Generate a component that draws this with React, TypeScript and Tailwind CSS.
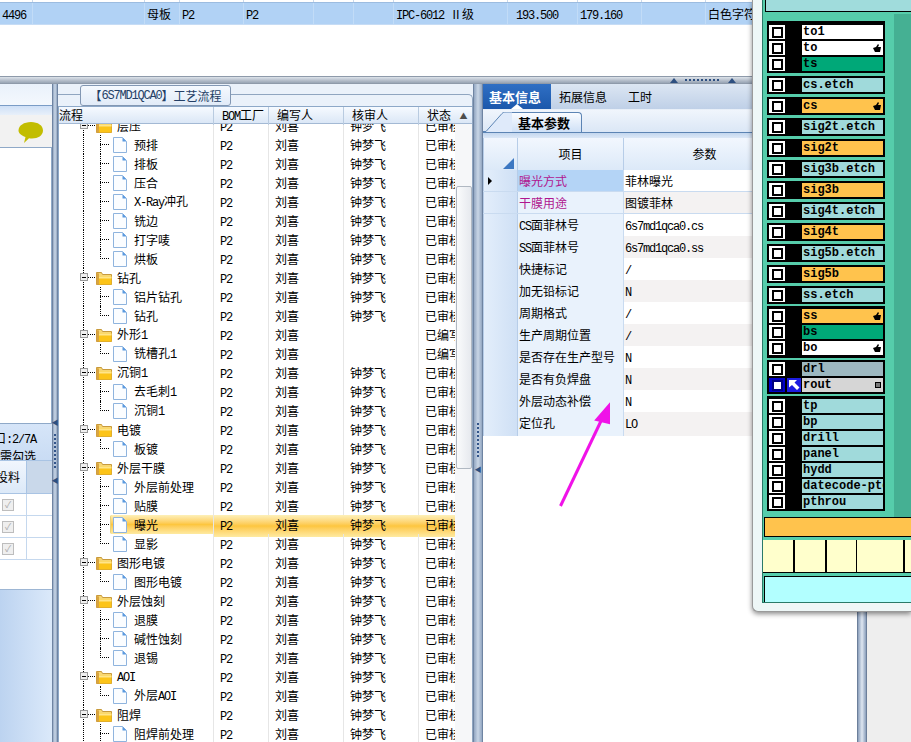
const FONT = '"Noto Sans CJK SC", sans-serif';

// latin text in the old app is a 6px wide bitmap font, cjk 12px
function Mix({ text }: { text: string }) {
  return (
    <>
      {text.split(/([\x00-\x7f]+)/).map((s, i) =>
        /^[\x00-\x7f]+$/.test(s) ? (
          <span key={i} className="font-['Liberation_Mono'] text-[12px] tracking-[-1.2px]">
            {s}
          </span>
        ) : (
          <span key={i}>{s}</span>
        )
      )}
    </>
  );
}

const topCols = "grid grid-cols-[33px_112px_35px_64px_70px_40px_40px_114px_70px_64px_64px_300px]";
const topRow = ["4496", "", "母板", "P2", "P2", "", "", "IPC-6012 Ⅱ级", "193.500", "179.160", "", "白色字符"];

type Node = { n: string; folder?: boolean; last?: boolean; sel?: boolean; draft?: boolean };
const tree: Node[] = [
  { n: "层压", folder: true },
  { n: "预排" },
  { n: "排板" },
  { n: "压合" },
  { n: "X-Ray冲孔" },
  { n: "铣边" },
  { n: "打字唛" },
  { n: "烘板", last: true },
  { n: "钻孔", folder: true },
  { n: "铝片钻孔" },
  { n: "钻孔", last: true },
  { n: "外形1", folder: true, draft: true },
  { n: "铣槽孔1", last: true, draft: true },
  { n: "沉铜1", folder: true },
  { n: "去毛刺1" },
  { n: "沉铜1", last: true },
  { n: "电镀", folder: true },
  { n: "板镀", last: true },
  { n: "外层干膜", folder: true },
  { n: "外层前处理" },
  { n: "贴膜" },
  { n: "曝光", sel: true },
  { n: "显影", last: true },
  { n: "图形电镀", folder: true },
  { n: "图形电镀", last: true },
  { n: "外层蚀刻", folder: true },
  { n: "退膜" },
  { n: "碱性蚀刻" },
  { n: "退锡", last: true },
  { n: "AOI", folder: true },
  { n: "外层AOI", last: true },
  { n: "阻焊", folder: true },
  { n: "阻焊前处理" },
];

const params: [string, string][] = [
  ["曝光方式", "菲林曝光"],
  ["干膜用途", "图镀菲林"],
  ["CS面菲林号", "6s7md1qca0.cs"],
  ["SS面菲林号", "6s7md1qca0.ss"],
  ["快捷标记", "/"],
  ["加无铅标记", "N"],
  ["周期格式", "/"],
  ["生产周期位置", "/"],
  ["是否存在生产型号", "N"],
  ["是否有负焊盘", "N"],
  ["外层动态补偿", "N"],
  ["定位孔", "LO"],
];

function FolderIcon() {
  return (
    <svg width="16" height="16" viewBox="0 0 16 16" className="shrink-0">
      <path d="M0.5 2.5h5l1 2h9v10h-15z" fill="#f7d774" stroke="#c89a3c" />
      <path d="M3 6.5h12.5v8h-12.5z" fill="#fcc419" />
      <path d="M3 6.5h12.5v2h-12.5z" fill="#ffe58a" />
      <path d="M0.5 3v11.5h2.5v-11z" fill="#d9a441" />
    </svg>
  );
}

function DocIcon() {
  return (
    <svg width="14" height="16" viewBox="0 0 14 16" className="shrink-0">
      <path d="M0.5 0.5h9l4 4v11h-13z" fill="#fbfdff" stroke="#8fb4de" />
      <path d="M9.5 0.5v4h4z" fill="#5b9ae0" />
    </svg>
  );
}

function Expander() {
  return (
    <span className="absolute left-[21px] top-[5px] flex h-[8px] w-[8px] items-center justify-center border border-[#9a9a9a] bg-[#f0f0f0]">
      <span className="h-px w-[4px] bg-black" />
    </span>
  );
}

function TreeRow({ node }: { node: Node }) {
  const cell = node.sel
    ? "bg-gradient-to-b from-[#fdf0b8] via-[#fdc63e] to-[#feeaa0]"
    : "border-r border-[#e6e6e6]";
  return (
    <div className="grid h-[19px] grid-cols-[155px_55px_75px_75px_36px] text-[12px] leading-[19px] text-black">
      <div className="relative flex h-[19px] items-center whitespace-nowrap border-r border-[#e6e6e6]">
        {node.sel && (
          <span className="absolute inset-y-0 left-[51px] right-0 rounded-l-[2px] border-l border-[#e8d27c] bg-gradient-to-b from-[#fdf0b8] via-[#fdc63e] to-[#feeaa0]" />
        )}
        <span className="absolute inset-y-0 left-[24px] border-l border-dotted border-black" />
        {node.folder ? (
          <>
            <span className="absolute left-[29px] top-[9px] w-[7px] border-t border-dotted border-black" />
            <Expander />
            <span className="relative ml-[37px] mr-[5px]">
              <FolderIcon />
            </span>
          </>
        ) : (
          <>
            <span className={`absolute left-[41px] top-0 border-l border-dotted border-black ${node.last ? "h-[10px]" : "h-[19px]"}`} />
            <span className="absolute left-[41px] top-[9px] w-[9px] border-t border-dotted border-black" />
            <span className="relative ml-[54px] mr-[7px]">
              <DocIcon />
            </span>
          </>
        )}
        <span className="relative">
          <Mix text={node.n} />
        </span>
      </div>
      <div className={`pl-[6px] ${cell}`}>
        <Mix text="P2" />
      </div>
      <div className={`pl-[6px] ${cell}`}>刘喜</div>
      <div className={`pl-[6px] ${cell}`}>{node.draft ? "" : "钟梦飞"}</div>
      <div className={`overflow-hidden whitespace-nowrap pl-[6px] ${node.sel ? cell : ""}`}>
        {node.draft ? "已编写" : "已审核"}
      </div>
    </div>
  );
}

function Splitter({ pad, arrowFirst }: { pad: string; arrowFirst?: boolean }) {
  return (
    <div className={`flex shrink-0 flex-col items-center gap-[8px] border-x border-[#6f84a2] bg-gradient-to-r from-[#93a7c2] via-[#c9d6e6] to-[#93a7c2] ${pad}`}>
      {arrowFirst && <span className="text-[7px] leading-[8px] text-[#2d4f80]">◀</span>}
      <span className="h-[34px] border-l-2 border-dotted border-[#33558a]" />
      <span className="text-[7px] leading-[8px] text-[#2d4f80]">◀</span>
    </div>
  );
}

function LeftColumn() {
  return (
    <div className="flex w-[52px] shrink-0 flex-col overflow-hidden">
      <div className="h-[22px] shrink-0 border-b border-[#7a9cc6] bg-gradient-to-b from-[#e9f1fb] to-[#f4f8fd]" />
      <div className="h-[9px] shrink-0 bg-gradient-to-b from-[#cfe0f6] to-[#e8f0fa]" />
      <div className="flex h-[32px] shrink-0 items-center justify-end bg-[#f2f2f2] pr-[8px] pt-[4px]">
        <svg width="26" height="22" viewBox="0 0 26 22">
          <path d="M13 0c7 0 12 3.500 12 8.500s-5 8-11 8c-1 0-2 0-3-.3l-5 4.800 1.500-6c-4-1.500-7-3.700-7-6.500 0-5 5.500-8.500 12.500-8.500z" fill="#c2bd00" />
        </svg>
      </div>
      <div className="h-[277px] shrink-0 border-y border-r border-[#8fa9c8] bg-white" />
      <div className="h-[36px] shrink-0 whitespace-nowrap bg-gradient-to-b from-[#d6e5f8] to-[#c9dcf4] text-[12px] leading-[15px] text-black">
        <div className="-ml-[6px] pt-[6px]">
          <Mix text="口:2/7A" />
        </div>
        <div>需勾选</div>
      </div>
      <div className="grid h-[34px] shrink-0 grid-cols-[27px_25px] border-y border-[#a9c4e4] text-[12px] leading-[32px]">
        <div className="overflow-hidden whitespace-nowrap border-r border-[#a9c4e4] bg-gradient-to-b from-[#f1f6fd] to-[#dce9f8]">
          <span className="-ml-[4px] block">投料</span>
        </div>
        <div className="bg-[#c9d8ea]" />
      </div>
      {[0, 1, 2].map((i) => (
        <div key={i} className="grid h-[22px] shrink-0 grid-cols-[27px_25px] border-b border-[#c5d8ee] bg-white">
          <div className="flex items-center border-r border-[#c5d8ee] pl-[2px]">
            <span className="flex h-[12px] w-[12px] items-center justify-center border border-[#bdbdbd] bg-[#efefef] text-[9px] leading-none text-[#aaaaaa]">
              ✓
            </span>
          </div>
          <div />
        </div>
      ))}
      <div className="h-[30px] shrink-0 border-b border-[#9db6d4] bg-white" />
      <div className="flex-1 bg-gradient-to-r from-[#bcd3f0] to-[#dbe9fa]" />
    </div>
  );
}

function TreePanel() {
  return (
    <div className="relative flex w-[415px] shrink-0 flex-col bg-[#eaf1fa]">
      <div className="h-[10px] shrink-0" />
      <div className="flex min-h-0 flex-1 flex-col rounded-tr-[5px] border-r border-t border-[#8fa5c0] pt-[11px]">
        <div className="flex min-h-0 flex-1 flex-col overflow-hidden border-l border-t border-[#8da8c8] bg-white">
          <div className="relative z-10 grid h-[17px] shrink-0 grid-cols-[155px_55px_75px_75px_36px_17px] border-b border-[#a3b9d4] bg-gradient-to-b from-[#f6faff] to-[#dbe7f6] text-[12px] leading-[16px] text-black">
            <div className="border-r border-[#b9cbe0]">流程</div>
            <div className="border-r border-[#b9cbe0] pl-[8px]">
              <Mix text="BOM工厂" />
            </div>
            <div className="border-r border-[#b9cbe0] pl-[8px]">编写人</div>
            <div className="border-r border-[#b9cbe0] pl-[8px]">核审人</div>
            <div className="pl-[8px]">状态</div>
            <div className="flex items-center justify-center text-[8px] text-[#4c4c4c]">▲</div>
          </div>
          <div className="flex min-h-0 flex-1">
            <div className="-mt-[8px] w-[396px] shrink-0">
              {tree.map((node, i) => (
                <TreeRow key={i} node={node} />
              ))}
            </div>
            <div className="flex-1 bg-[#f6f7f9] pt-[62px]">
              <div className="mx-auto h-[283px] w-[16px] rounded-[2px] border border-[#b0b8c2] bg-gradient-to-r from-[#fafbfc] to-[#e6e9ee]" />
            </div>
          </div>
        </div>
      </div>
      <div className="absolute left-[22px] top-[1px] flex h-[21px] w-[151px] items-center justify-center whitespace-nowrap rounded-b-[3px] rounded-t-[3px] border border-[#8297b3] bg-gradient-to-b from-[#f5f9fe] to-[#e1ebf8] text-[12px] text-[#243f66]">
        <Mix text="【6S7MD1QCA0】工艺流程" />
      </div>
    </div>
  );
}

function ParamPanel() {
  return (
    <div className="flex w-[374px] shrink-0 flex-col bg-white">
      <div className="flex h-[26px] shrink-0 items-stretch border-b border-[#e8eff8] bg-gradient-to-b from-[#dce6f3] to-[#bfd0e7] text-[12px]">
        <div className="relative flex w-[68px] items-center bg-gradient-to-b from-[#2f6fc4] to-[#1c58ab] pl-[6px] text-[13px] font-bold text-white">
          基本信息
          <span className="absolute bottom-0 left-1/2 h-0 w-0 -translate-x-1/2 border-x-[6px] border-b-[5px] border-x-transparent border-b-white" />
        </div>
        <div className="ml-[8px] flex items-center text-black">拓展信息</div>
        <div className="ml-[21px] flex items-center text-black">工时</div>
      </div>
      <div className="flex h-[23px] shrink-0 items-end border-b border-[#5c84b4] bg-gradient-to-b from-[#f0f5fc] to-[#dbe7f6]">
        <svg width="29" height="20" viewBox="0 0 29 20" className="shrink-0">
          <path d="M0 20h3l16-18c1-1 2-2 4-2h6v20z" fill="#dfeafa" />
          <path d="M0 19.500h3l16-18c1-1 2-1.500 4-1.500h6" fill="none" stroke="#5c84b4" />
        </svg>
        <div className="flex h-[20px] w-[70px] items-center rounded-tr-[4px] border-r border-t border-[#5c84b4] bg-gradient-to-b from-[#fafcff] to-[#cfe0f6] pl-[6px] text-[13px] font-bold leading-none text-black">
          基本参数
        </div>
      </div>
      <div className="h-[5px] shrink-0 bg-gradient-to-b from-[#c3d6ee] to-[#dce8f7]" />
      <div className="grid h-[32px] shrink-0 grid-cols-[35px_106px_162px] border-b border-[#9db8da] text-[12px] leading-[32px] text-black">
        <div className="relative border-x border-[#b7cde8] bg-gradient-to-b from-[#f2f7fe] to-[#dce9f8]">
          <span className="absolute bottom-[1px] right-[3px] h-0 w-0 border-b-[11px] border-l-[11px] border-b-[#3d78c2] border-l-transparent" />
        </div>
        <div className="border-r border-[#b7cde8] bg-gradient-to-b from-[#f2f7fe] to-[#dce9f8] text-center">项目</div>
        <div className="border-r border-[#b7cde8] bg-gradient-to-b from-[#f2f7fe] to-[#dce9f8] text-center">参数</div>
      </div>
      {params.map(([key, val], i) => (
        <div key={key} className="grid h-[22px] shrink-0 grid-cols-[35px_106px_233px] border-b border-[#c9dbf0] text-[12px] leading-[21px] text-black">
          <div className="flex items-center border-x border-[#b7cde8] bg-gradient-to-r from-[#e3eefb] to-[#cfe0f5] pl-[4px]">
            {i === 0 && <span className="h-0 w-0 border-y-[4px] border-l-[4px] border-y-transparent border-l-black" />}
          </div>
          <div className={`overflow-hidden whitespace-nowrap border-r border-[#c9dbf0] pl-[1px] ${i === 0 ? "bg-[#b4d4f6]" : "bg-[#e9f2fc]"} ${i < 2 ? "text-[#b0168f]" : ""}`}>
            <Mix text={key} />
          </div>
          <div className={`pl-[1px] ${i % 2 === 1 ? "bg-[#f4f2f2]" : "bg-white"}`}>
            <Mix text={val} />
          </div>
        </div>
      ))}
    </div>
  );
}

type Layer = { n: string; bg: string; hand?: boolean; active?: boolean };

function Box({ active }: { active?: boolean }) {
  return (
    <span className={`flex h-[14px] w-[16px] shrink-0 items-center justify-center ${active ? "bg-[#0000c8]" : "bg-white"}`}>
      <span className={`h-[11px] w-[11px] border-2 ${active ? "border-[#000080] bg-white" : "border-black bg-white"}`} />
    </span>
  );
}

function LayerRow({ layer }: { layer: Layer }) {
  return (
    <div className="flex h-[14px] items-stretch">
      <Box active={layer.active} />
      <span className={`ml-[2px] flex h-[14px] w-[14px] shrink-0 items-center justify-center ${layer.active ? "bg-[#1c1ce0]" : ""}`}>
        {layer.active && (
          <svg width="12" height="12" viewBox="0 0 12 12">
            <path d="M1 1h8l-2.500 2.500 5 5-2.500 2.500-5-5-3 2.500z" fill="#fff" />
          </svg>
        )}
      </span>
      <span className={`ml-[1px] flex w-[82px] items-center overflow-hidden whitespace-nowrap pl-[1px] font-['Liberation_Mono'] text-[12px] font-bold leading-none text-black ${layer.bg}`}>
        <span className="flex-1">{layer.n}</span>
        {layer.hand && (
          <svg width="8" height="8" viewBox="0 0 8 8" className="mr-[2px] shrink-0">
            <path d="M0 4l3-1 2-3 1 1-1 2 3 0-1 5h-5z" fill="#000" />
          </svg>
        )}
        {layer.n === "rout" && <span className="mr-[2px] h-[6px] w-[6px] shrink-0 border border-black bg-[#777]" />}
      </span>
    </div>
  );
}

const CYAN = "bg-[#a0dadb]";
const ORANGE = "bg-[#ffc34d]";
const WHITE = "bg-white";
const GREEN = "bg-[#00a878]";

const singles: Layer[] = [
  { n: "cs.etch", bg: CYAN },
  { n: "cs", bg: ORANGE, hand: true },
  { n: "sig2t.etch", bg: CYAN },
  { n: "sig2t", bg: ORANGE },
  { n: "sig3b.etch", bg: CYAN },
  { n: "sig3b", bg: ORANGE },
  { n: "sig4t.etch", bg: CYAN },
  { n: "sig4t", bg: ORANGE },
  { n: "sig5b.etch", bg: CYAN },
  { n: "sig5b", bg: ORANGE },
  { n: "ss.etch", bg: CYAN },
];

function LayerGroup({ rows, cls }: { rows: Layer[]; cls: string }) {
  return (
    <div className={`flex w-[118px] flex-col gap-[2px] bg-black px-[2px] ${cls}`}>
      {rows.map((l) => (
        <LayerRow key={l.n} layer={l} />
      ))}
    </div>
  );
}

function LayerWindow() {
  return (
    <div className="absolute left-[752px] top-0 flex h-[612px] w-[159px] flex-col rounded-bl-[6px] border-l border-b border-[#9a9a9a] bg-[#eef7f7] pl-[9px] pb-[8px] shadow-[0_2px_5px_rgba(0,0,0,0.45)]">
      <div className="flex flex-1 flex-col overflow-hidden border-l border-b border-[#2a7a68] bg-[#56cdab]">
        <div className="ml-[2px] h-[12px] shrink-0 border-b border-l border-black bg-[#a0dcdc]" />
        <div className="flex h-[505px] shrink-0">
          <div className="ml-[4px] flex h-[499px] w-[118px] shrink-0 flex-col overflow-hidden pt-[9px]">
            <LayerGroup
              cls="pt-[4px] pb-[2px]"
              rows={[
                { n: "to1", bg: WHITE },
                { n: "to", bg: WHITE, hand: true },
                { n: "ts", bg: GREEN },
              ]}
            />
            <div className="mt-[3px] flex flex-col gap-[3px]">
              {singles.map((l) => (
                <LayerGroup key={l.n} cls="py-[2px]" rows={[l]} />
              ))}
            </div>
            <LayerGroup
              cls="mt-[2px] py-[3px]"
              rows={[
                { n: "ss", bg: ORANGE, hand: true },
                { n: "bs", bg: GREEN },
                { n: "bo", bg: WHITE, hand: true },
              ]}
            />
            <LayerGroup
              cls="mt-[2px] py-[2px]"
              rows={[
                { n: "drl", bg: "bg-[#9db8c0]" },
                { n: "rout", bg: "bg-[#d6d6d6]", active: true },
              ]}
            />
            <LayerGroup
              cls="mt-[2px] pt-[3px]"
              rows={[
                { n: "tp", bg: CYAN },
                { n: "bp", bg: CYAN },
                { n: "drill", bg: CYAN },
                { n: "panel", bg: CYAN },
                { n: "hydd", bg: CYAN },
                { n: "datecode-pte", bg: CYAN },
                { n: "pthrou", bg: CYAN },
                { n: "", bg: CYAN },
              ]}
            />
          </div>
          <div className="ml-[9px] mt-[2px] flex-1 bg-[#45b093]" />
        </div>
        <div className="ml-[1px] h-[20px] shrink-0 border-y border-l border-black bg-[#ffc34d]" />
        <div className="mt-[3px] flex h-[33px] shrink-0 border-b border-black bg-[#ffffcc]">
          <div className="w-[32px] border-r-2 border-black" />
          <div className="w-[32px] border-r-2 border-black" />
          <div className="w-[30px] border-r border-black" />
          <div className="w-[48px] border-r-2 border-black" />
          <div className="flex-1" />
        </div>
        <div className="mt-[3px] ml-[1px] h-[27px] shrink-0 border-y border-l border-black bg-[#b2ffff]" />
      </div>
    </div>
  );
}

export default function App() {
  return (
    <div className="relative flex h-[742px] w-[911px] flex-col overflow-hidden bg-white" style={{ fontFamily: FONT }}>
      {/* top table */}
      <div className="h-[76px] shrink-0 bg-white">
        <div className={`${topCols} h-[3px] border-b border-[#9cbce0]`}>
          {topRow.map((_, i) => (
            <div key={i} className="border-r border-[#c9d9ec]" />
          ))}
        </div>
        <div className={`${topCols} h-[22px] border-b border-[#c6dcf5] bg-[#b1d2f5] text-[12px] leading-[22px] text-black`}>
          {topRow.map((t, i) => (
            <div key={i} className={`overflow-hidden whitespace-nowrap border-r border-[#c2dcf7] ${i === 8 ? "pl-[8px]" : "pl-[2px]"}`}>
              <Mix text={t} />
            </div>
          ))}
        </div>
      </div>

      {/* horizontal splitter */}
      <div className="flex h-[8px] shrink-0 items-center gap-[4px] border-y border-[#8e9aaa] bg-gradient-to-b from-[#dde3ea] to-[#98a4b4] pl-[670px]">
        <span className="h-0 w-0 border-x-[4px] border-b-[5px] border-x-transparent border-b-[#2d4f80]" />
        <span className="ml-[3px] w-[34px] border-t-2 border-dotted border-[#2d4f80]" />
        <span className="ml-[5px] h-0 w-0 border-x-[4px] border-b-[5px] border-x-transparent border-b-[#2d4f80]" />
      </div>

      {/* bottom panels */}
      <div className="flex min-h-0 flex-1">
        <LeftColumn />
        <Splitter pad="w-[6px] pt-[334px]" arrowFirst />
        <TreePanel />
        <Splitter pad="w-[10px] pt-[339px]" />
        <ParamPanel />
        <div className="flex w-[10px] shrink-0 justify-center border-x border-[#6c7f9a] bg-gradient-to-r from-[#8b9fbb] via-[#dfe7f1] to-[#8b9fbb]" />
        <div className="flex-1 bg-[#eeeeee]" />
      </div>

      <LayerWindow />

      {/* annotation arrow */}
      <svg className="absolute left-[550px] top-[395px]" width="70" height="120" viewBox="0 0 70 120">
        <path d="M10.500 111L51 26" stroke="#f012e8" strokeWidth="3" fill="none" />
        <path d="M59 10L46 25l13 3z" fill="#f012e8" stroke="#f012e8" strokeWidth="2" />
      </svg>
    </div>
  );
}
